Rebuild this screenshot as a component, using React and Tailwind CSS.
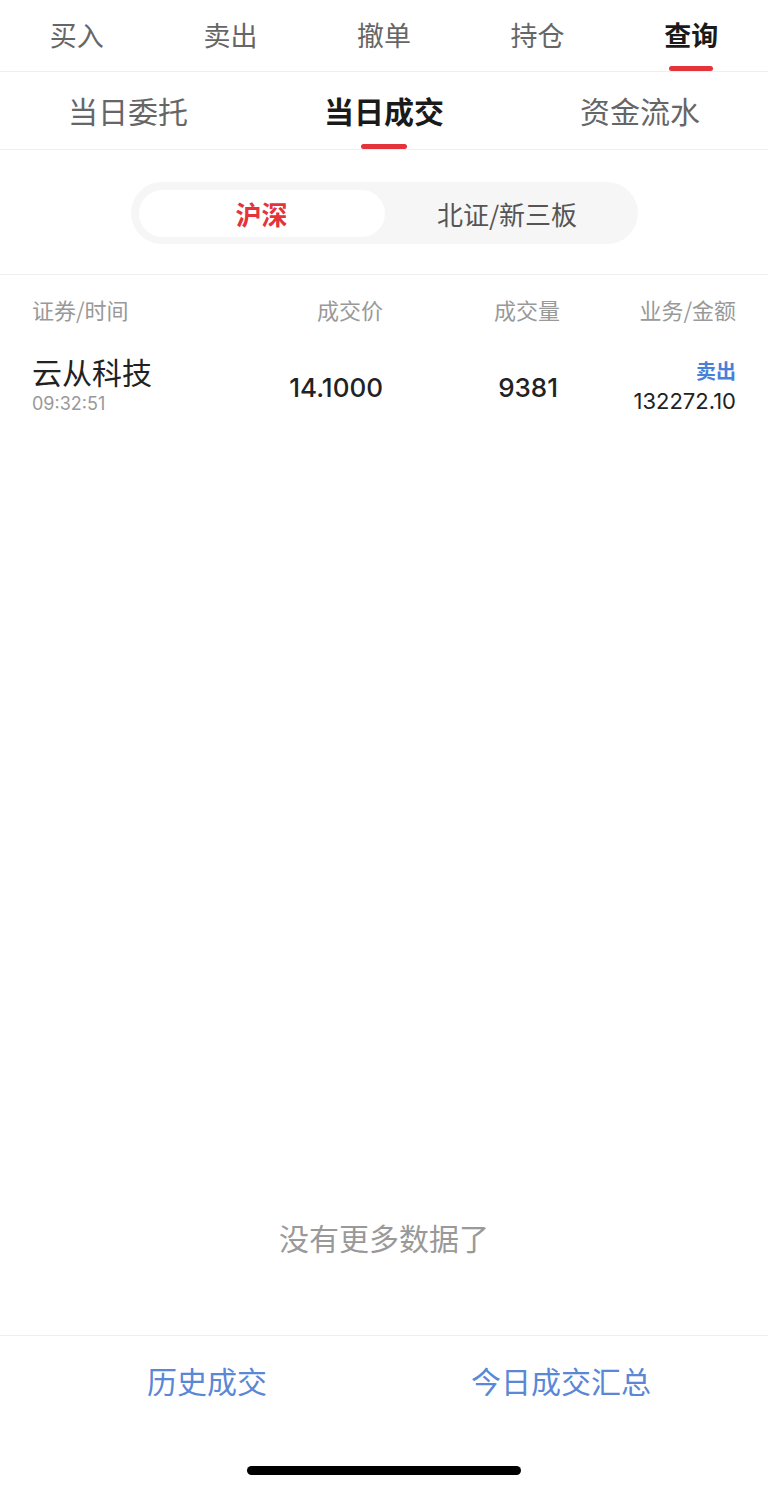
// 交易 - 查询 - 当日成交

const topTabs = ["买入", "卖出", "撤单", "持仓", "查询"];
const subTabs = ["当日委托", "当日成交", "资金流水"];

const trades = [
    {
        name: "云从科技",
        time: "09:32:51",
        price: "14.1000",
        volume: "9381",
        side: "卖出",
        amount: "132272.10",
    },
];

const num = { fontFamily: 'Inter, "Noto Sans CJK SC", sans-serif' };

export default function App() {
    return (
        <div
            className="flex h-[1491px] w-[768px] flex-col bg-white text-[#222]"
            style={{ fontFamily: '"Noto Sans CJK SC", "Noto Sans", sans-serif' }}
        >
            <div className="grid h-[72px] grid-cols-5 border-b border-[#efefef]">
                {topTabs.map((tab) => {
                    const active = tab === "查询";

                    return (
                        <div key={tab} className="relative flex items-center justify-center pb-[2px]">
                            <span
                                className={`text-[27px] leading-none ${
                                    active ? "font-bold text-[#1a1a1a]" : "text-[#666]"
                                }`}
                            >
                                {tab}
                            </span>
                            {active && (
                                <span className="absolute bottom-0 left-1/2 h-[5px] w-[44px] -translate-x-1/2 rounded-full bg-[#e4333b]" />
                            )}
                        </div>
                    );
                })}
            </div>

            <div className="grid h-[78px] grid-cols-3 border-b border-[#efefef]">
                {subTabs.map((tab) => {
                    const active = tab === "当日成交";

                    return (
                        <div key={tab} className="relative flex items-center justify-center pb-[2px]">
                            <span
                                className={`text-[30px] leading-none ${
                                    active ? "font-bold text-[#1a1a1a]" : "text-[#666]"
                                }`}
                            >
                                {tab}
                            </span>
                            {active && (
                                <span className="absolute bottom-0 left-1/2 h-[5px] w-[46px] -translate-x-1/2 rounded-full bg-[#e4333b]" />
                            )}
                        </div>
                    );
                })}
            </div>

            <div className="flex justify-center border-b border-[#efefef] pt-[32px] pb-[30px]">
                <div className="flex h-[62px] w-[507px] items-center rounded-full bg-[#f6f6f6] p-[8px]">
                    <div className="flex h-[47px] w-[246px] items-center justify-center rounded-full bg-white text-[26px] font-bold text-[#e4333b]">
                        沪深
                    </div>
                    <div className="flex h-[47px] flex-1 items-center justify-center text-[26px] text-[#555]">
                        北证/新三板
                    </div>
                </div>
            </div>

            <div className="flex flex-1 flex-col">
                <div className="grid grid-cols-[1fr_130px_177px_176px] px-[32px] pt-[20px] pb-[22px] text-[22px] leading-[28px] text-[#999]">
                    <span>证券/时间</span>
                    <span className="text-right">成交价</span>
                    <span className="text-right">成交量</span>
                    <span className="text-right">业务/金额</span>
                </div>

                {trades.map((trade) => (
                    <div
                        key={trade.name + trade.time}
                        className="grid grid-cols-[1fr_130px_177px_176px] items-center px-[32px] pt-[8px]"
                    >
                        <div className="flex flex-col">
                            <span className="text-[30px] leading-[36px] text-[#222]">{trade.name}</span>
                            <span className="text-[18px] leading-[30px] text-[#999]" style={num}>
                                {trade.time}
                            </span>
                        </div>
                        <span className="pt-[2px] text-right text-[26px] font-medium text-[#222]" style={num}>
                            {trade.price}
                        </span>
                        <span className="pt-[2px] pr-[2px] text-right text-[26px] font-medium text-[#222]" style={num}>
                            {trade.volume}
                        </span>
                        <div className="flex flex-col items-end pt-[2px]">
                            <span className="text-[20px] leading-[28px] font-bold text-[#4a7fd8]">{trade.side}</span>
                            <span className="text-[22px] leading-[32px] text-[#222]" style={num}>
                                {trade.amount}
                            </span>
                        </div>
                    </div>
                ))}

                <div className="flex-1" />

                <p className="pb-[78px] text-center text-[30px] leading-[40px] text-[#999]">
                    没有更多数据了
                </p>
            </div>

            <div className="flex h-[156px] flex-col border-t border-[#efefef]">
                <div className="grid grid-cols-2 pt-[24px]">
                    <button type="button" className="pl-[30px] text-[30px] leading-[40px] text-[#5a87d6]">
                        历史成交
                    </button>
                    <button type="button" className="pr-[30px] text-[30px] leading-[40px] text-[#5a87d6]">
                        今日成交汇总
                    </button>
                </div>
                <div className="mt-auto flex justify-center pb-[16px]">
                    <span className="h-[9px] w-[274px] rounded-full bg-black" />
                </div>
            </div>
        </div>
    );
}
